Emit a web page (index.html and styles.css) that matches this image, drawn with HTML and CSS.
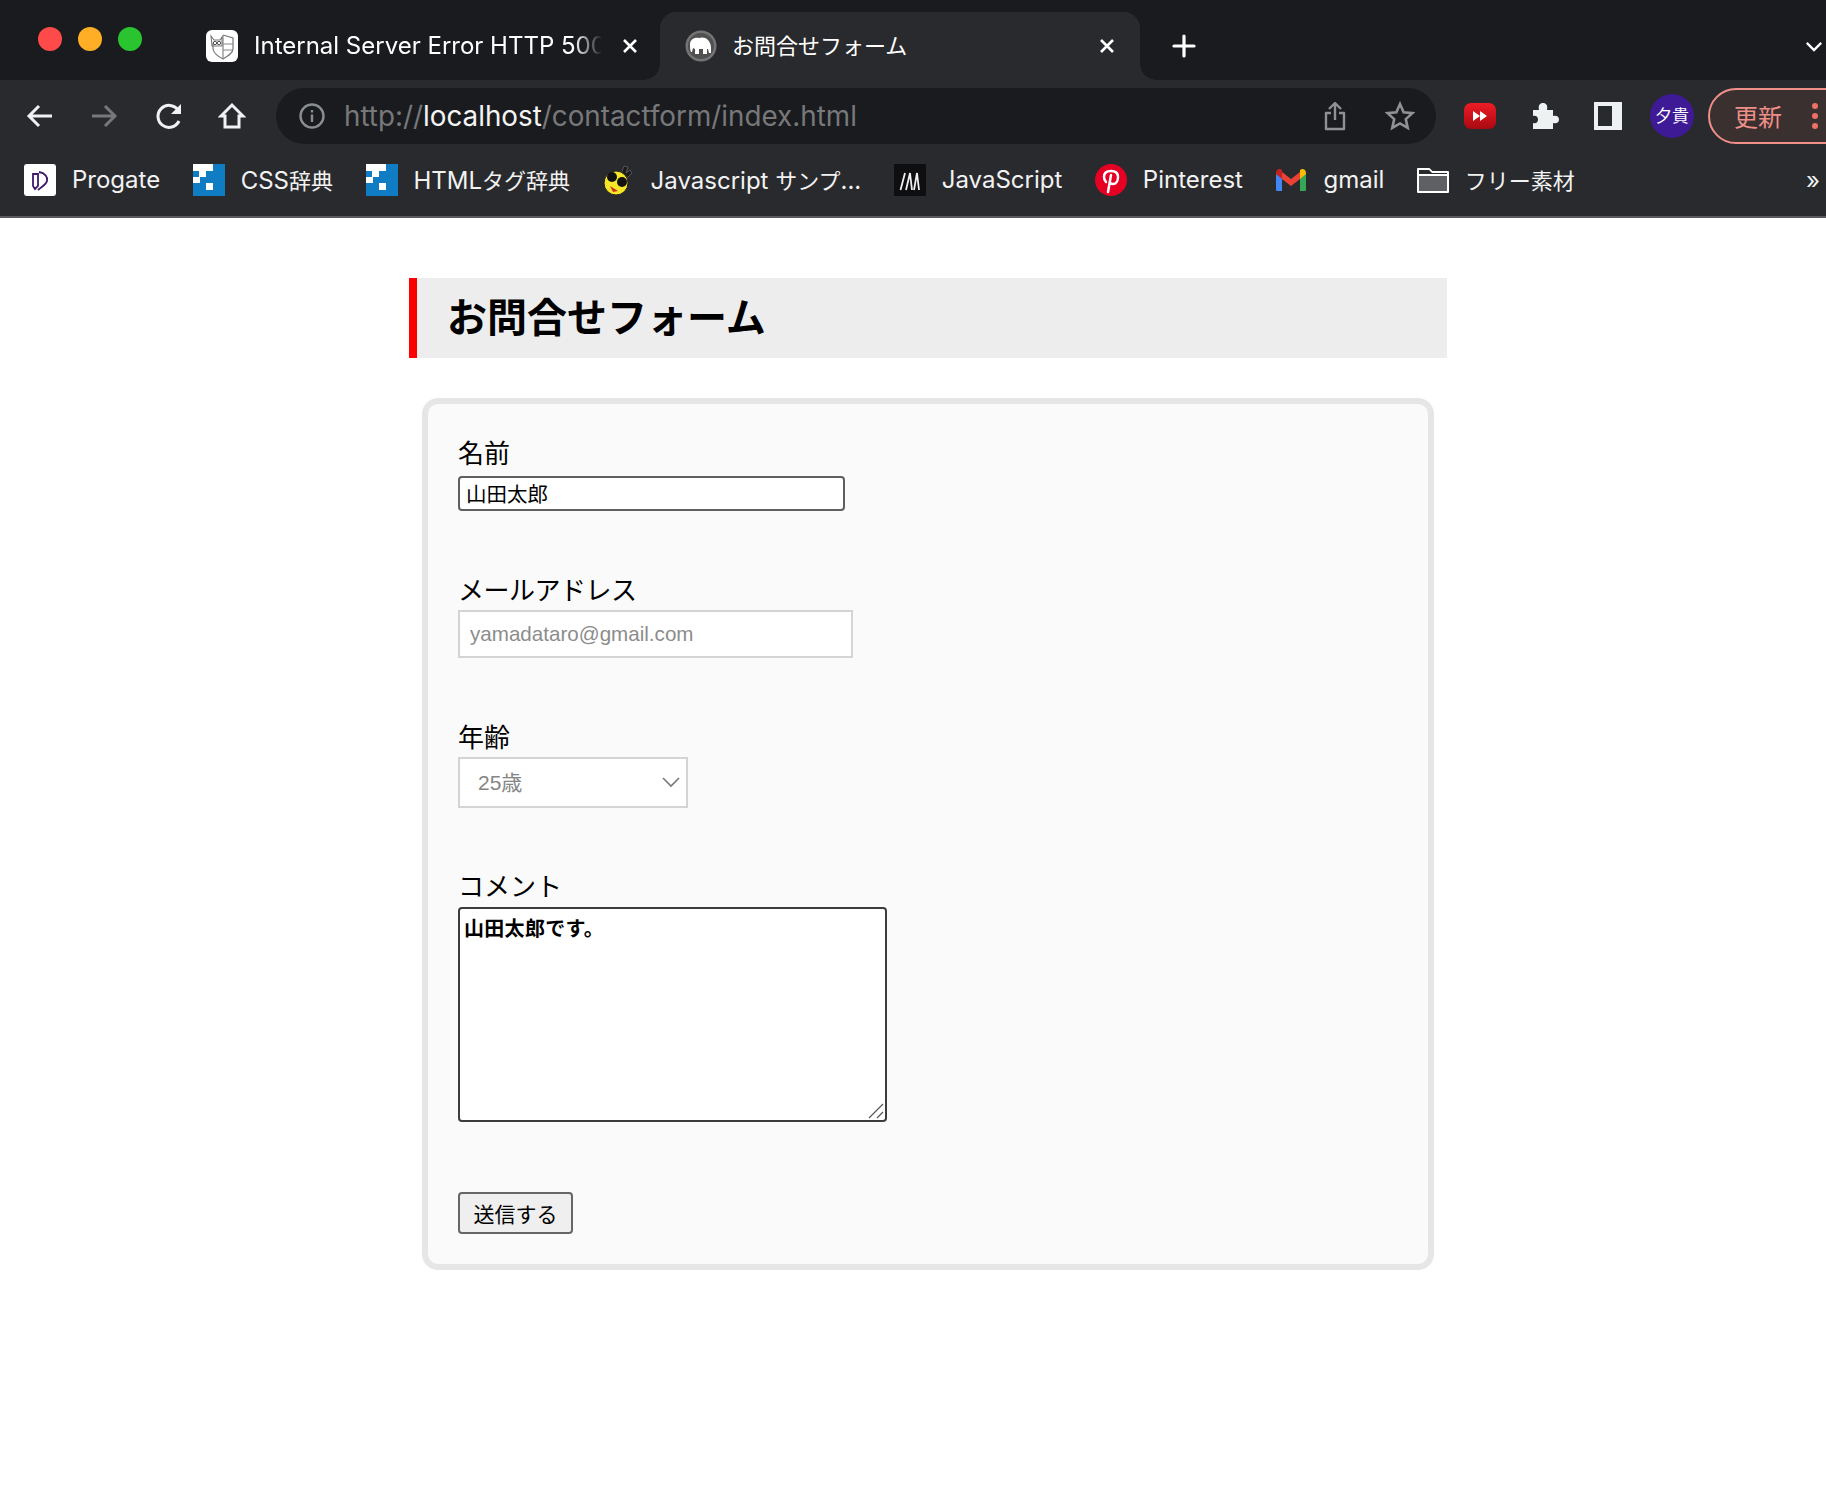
FILE: index.html
```html
<!DOCTYPE html>
<html lang="ja">
<head>
    <meta charset="UTF-8">
    <meta name="viewport" content="width=device-width, initial-scale=1.0">
    <title>お問合せフォーム</title>
    <link rel="stylesheet" href="styles.css">
</head>
<body>

    <!-- Tab strip -->
    <div class="tabstrip">
        <div class="lights">
            <span class="light light-red"></span>
            <span class="light light-yellow"></span>
            <span class="light light-green"></span>
        </div>
        <div class="tab">
            <svg class="favicon" viewBox="0 0 32 32">
                <rect width="32" height="32" rx="6" fill="#fff"/>
                <path d="M17 5l10 3v11c0 4-5 7-10 10-4-2-9-5-10-10V13" fill="none" stroke="#777" stroke-width="1.2"/>
                <path d="M17 5v24M17 14h10M17 20h10" fill="none" stroke="#888" stroke-width="1.2"/>
                <path d="M5 6l3 4h6l2-3v9H6z" fill="none" stroke="#777" stroke-width="1.1"/>
                <circle cx="9" cy="13" r="1.7" fill="none" stroke="#555"/>
                <circle cx="13" cy="13" r="1.7" fill="none" stroke="#555"/>
            </svg>
            <span class="tab-title tab-title-fade">Internal Server Error HTTP 500</span>
            <svg class="tab-close" viewBox="0 0 16 16"><path d="M2 2l12 12M14 2L2 14"/></svg>
        </div>
        <div class="tab tab-active">
            <svg class="favicon" viewBox="0 0 32 32">
                <circle cx="16" cy="16" r="15.500" fill="#747474"/>
                <circle cx="16" cy="16" r="13" fill="#505050"/>
                <path d="M5 14c0-4 4-7 9-6 2-1 7-1 9 2 2 2 3 5 3 8v5h-2l-1-4-1 0v5h-4v-5h-4v5h-4v-5l-2-1-1 4H6c-1-2-1-5-1-8z" fill="#fff"/>
            </svg>
            <span class="tab-title">お問合せフォーム</span>
            <svg class="tab-close" viewBox="0 0 16 16"><path d="M2 2l12 12M14 2L2 14"/></svg>
        </div>
        <svg class="new-tab" viewBox="0 0 24 24"><path d="M12 2v20M2 12h20"/></svg>
        <svg class="tab-search" viewBox="0 0 20 12"><path d="M2 2l8 8 8-8"/></svg>
    </div>

    <!-- Toolbar -->
    <div class="toolbar">
        <svg class="nav-icon" viewBox="0 0 28 28"><path d="M26 14H3M13 4L3 14l10 10"/></svg>
        <svg class="nav-icon nav-off" viewBox="0 0 28 28"><path d="M2 14h23M15 4l10 10-10 10"/></svg>
        <svg class="nav-icon" viewBox="0 0 28 28"><path d="M25 19a11 11 0 1 1-1-11"/><path class="fill-icon" d="M27 2v10H17z"/></svg>
        <svg class="nav-icon" viewBox="0 0 28 28"><path d="M14 3L3 14h4v11h14V14h4z"/></svg>
        <div class="omnibox">
            <svg class="info-icon" viewBox="0 0 26 26">
                <circle cx="13" cy="13" r="11.5"/>
                <path d="M13 11.5v7.5M13 7v2.5"/>
            </svg>
            <div class="url"><span class="url-dim">http://</span><span class="url-host">localhost</span><span class="url-dim">/contactform/index.html</span></div>
            <svg class="share-icon" viewBox="0 0 22 30">
                <path d="M11 19V2M5 8l6-6 6 6M7 12H2v16h18V12h-5"/>
            </svg>
            <svg class="star-icon" viewBox="0 0 30 30">
                <path d="M15 3l3.6 8.2 8.9.9-6.7 6 1.9 8.8-7.700-4.500-7.700 4.500 1.900-8.800-6.700-6 8.900-.9z"/>
            </svg>
        </div>
        <svg class="ext-yt" viewBox="0 0 32 26">
            <defs>
                <linearGradient id="ytred" x1="0" y1="0" x2="0" y2="1">
                    <stop offset="0" stop-color="#ee1c25"/>
                    <stop offset="1" stop-color="#a80a12"/>
                </linearGradient>
            </defs>
            <rect width="32" height="26" rx="7" fill="url(#ytred)"/>
            <path d="M9 8l7 5-7 5zM16 8l7 5-7 5z" fill="#fff"/>
        </svg>
        <svg class="ext-puzzle" viewBox="0 0 28 28">
            <path d="M2 8h6c-1-5 1-7 4-7s5 2 4 7h6v6c4-1 6 1 6 3.500s-2 4.500-6 3.500v6H2v-6c3 1 5-1 5-3.500S5 13 2 14z" fill="#eef1f2"/>
        </svg>
        <div class="side-panel"><span></span></div>
        <div class="avatar">夕貴</div>
        <div class="update">
            <span class="update-text">更新</span>
            <span class="update-dots"><i></i><i></i><i></i></span>
        </div>
    </div>

    <!-- Bookmarks -->
    <div class="bookmarks">
        <a class="bookmark" href="#">
            <svg class="bm-icon" viewBox="0 0 32 32">
                <rect width="32" height="32" rx="3" fill="#fff"/>
                <path d="M9 10h5v12l-3 3-2-3zM15 8c6 1 9 5 8 9-1 4-6 6-9 9" fill="none" stroke="#3f1a6b" stroke-width="1.800"/>
            </svg>
            <span>Progate</span>
        </a>
        <a class="bookmark" href="#">
            <svg class="bm-icon" viewBox="0 0 32 32">
                <rect width="32" height="32" fill="#0f7cc4"/>
                <path d="M0 0h20v7h-7v6H6V7H0zM0 13h7v6H0zM13 19h7v7h-7z" fill="#fff"/>
            </svg>
            <span>CSS<span class="ja">辞典</span></span>
        </a>
        <a class="bookmark" href="#">
            <svg class="bm-icon" viewBox="0 0 32 32">
                <rect width="32" height="32" fill="#0f7cc4"/>
                <path d="M0 0h20v7h-7v6H6V7H0zM0 13h7v6H0zM13 19h7v7h-7z" fill="#fff"/>
            </svg>
            <span>HTML<span class="ja">タグ辞典</span></span>
        </a>
        <a class="bookmark" href="#">
            <svg class="bm-icon" viewBox="0 0 32 32">
                <path d="M18 10l3-8 4 1-2 6 4-3 2 3-5 5z" fill="#1b1b1b" stroke="#555"/>
                <circle cx="13" cy="19" r="12" fill="#f5e629" stroke="#222"/>
                <circle cx="9" cy="13" r="5" fill="#111"/>
                <circle cx="19" cy="18" r="5" fill="#111"/>
                <path d="M7 22l8 5-5 1z" fill="#c6321d"/>
            </svg>
            <span>Javascript <span class="ja">サンプ</span>...</span>
        </a>
        <a class="bookmark" href="#">
            <svg class="bm-icon" viewBox="0 0 32 32">
                <rect width="32" height="32" fill="#0e0e11"/>
                <path d="M6.500 26L11 9M12 26l4-17 2 17M20 26l3-17 2 17" fill="none" stroke="#eee" stroke-width="1.800"/>
            </svg>
            <span>JavaScript</span>
        </a>
        <a class="bookmark" href="#">
            <svg class="bm-icon" viewBox="0 0 32 32">
                <circle cx="16" cy="16" r="16" fill="#e60023"/>
                <path d="M11 18c-2-2-2-4-2-5 0-4 3-6 7-6s7 2 7 6-2 7-5 7c-2 0-3-1-3-2M16 11l-3 17" fill="none" stroke="#fff" stroke-width="2.500" stroke-linecap="round"/>
            </svg>
            <span>Pinterest</span>
        </a>
        <a class="bookmark" href="#">
            <svg class="bm-icon" viewBox="0 0 32 32">
                <path d="M1 9v17a1 1 0 0 0 1 1h5V13z" fill="#4285f4"/>
                <path d="M31 9v17a1 1 0 0 1-1 1h-5V13z" fill="#34a853"/>
                <path d="M7 8l9 7 9-7v7l-9 7-9-7z" fill="#ea4335"/>
                <path d="M1 9c0-4 4-5 6-3v9L1 10z" fill="#c5221f"/>
                <path d="M31 9c0-4-4-5-6-3v9l6-5z" fill="#fbbc04"/>
            </svg>
            <span>gmail</span>
        </a>
        <a class="bookmark" href="#">
            <svg class="bm-folder" viewBox="0 0 32 26">
                <path d="M1 2h11l3 3h16v20H1z" fill="#5f6063" stroke="#fff" stroke-width="2" stroke-linejoin="round"/>
                <path d="M1 8h30" stroke="#fff" stroke-width="2"/>
                <path d="M2 3h10l3 3h15v1H2z" fill="#292a2e"/>
            </svg>
            <span class="ja">フリー素材</span>
        </a>
        <span class="bm-more">»</span>
    </div>

    <!-- Page -->
    <div class="page">
        <h1 class="page-title">お問合せフォーム</h1>

        <form class="contact-form">
            <div class="field field-name">
                <label for="name">名前</label>
                <input type="text" id="name" class="input-plain" value="山田太郎">
            </div>
            <div class="field field-mail">
                <label for="mail">メールアドレス</label>
                <input type="text" id="mail" class="input-mail" placeholder="yamadataro@gmail.com">
            </div>
            <div class="field field-age">
                <label for="age">年齢</label>
                <div class="select-wrap">
                    <select id="age" class="input-select">
                        <option>25歳</option>
                    </select>
                    <svg class="select-arrow" viewBox="0 0 18 11"><path d="M1 1l8 8 8-8"/></svg>
                </div>
            </div>
            <div class="field field-comment">
                <label for="comment">コメント</label>
                <div class="comment-wrap">
                    <textarea id="comment" class="input-comment">山田太郎です。</textarea>
                    <svg class="comment-grip" viewBox="0 0 16 16"><path d="M1 15L15 1M9 15l6-6"/></svg>
                </div>
            </div>
            <button type="button" class="submit">送信する</button>
        </form>
    </div>

</body>
</html>
```

FILE: styles.css
```css
/* General Styles */
body {
    margin: 0;
    padding: 0;
    background-color: #fff;
    font-family: "Liberation Sans", "Noto Sans CJK JP", sans-serif;
    color: #000;
}

svg {
    display: block;
    flex: none;
}

/* Tab strip */
.tabstrip {
    display: flex;
    height: 80px;
    background-color: #1a1b1e;
    color: #fff;
    font-family: Inter, "Noto Sans CJK JP", sans-serif;
}

.lights {
    flex: none;
    display: flex;
    gap: 16px;
    width: 206px;
    padding: 27px 0 0 38px;
    box-sizing: border-box;
}

.light {
    width: 24px;
    height: 24px;
    border-radius: 50%;
}

.light-red { background-color: #ff4a4a; }
.light-yellow { background-color: #ffae25; }
.light-green { background-color: #29c42f; }

.tab {
    flex: none;
    display: flex;
    align-items: center;
    width: 454px;
    height: 68px;
    margin-top: 12px;
    position: relative;
    box-sizing: border-box;
}

.tab-active {
    width: 480px;
    padding-left: 25px;
    background-color: #292a2e;
    border-radius: 16px 16px 0 0;
}

/* curved feet of the active tab */
.tab-active::before,
.tab-active::after {
    content: "";
    position: absolute;
    bottom: 0;
    width: 16px;
    height: 16px;
    background: radial-gradient(circle at 0 0, #1a1b1e 15.5px, #292a2e 16px);
}

.tab-active::before {
    left: -16px;
}

.tab-active::after {
    right: -16px;
    background: radial-gradient(circle at 100% 0, #1a1b1e 15.500px, #292a2e 16px);
}

.favicon {
    width: 32px;
    height: 32px;
}

.tab-title {
    margin-left: 16px;
    padding-bottom: 2px;
    font-size: 24px;
    width: 348px;
    white-space: nowrap;
    overflow: hidden;
}

.tab-title-fade {
    -webkit-mask-image: linear-gradient(to right, #000 92%, transparent 100%);
    mask-image: linear-gradient(to right, #000 92%, transparent 100%);
}

.tab-active .tab-title {
    margin-left: 15px;
    padding-bottom: 4px;
    font-size: 22px;
    width: 347px;
}

.tab-close {
    width: 16px;
    height: 16px;
    margin-left: 20px;
    fill: none;
    stroke: #fff;
    stroke-width: 2.6;
}

.new-tab {
    width: 24px;
    height: 24px;
    margin: 34px 0 0 32px;
    fill: none;
    stroke: #fff;
    stroke-width: 3.2;
    stroke-linecap: round;
}

.tab-search {
    width: 18px;
    height: 11px;
    margin: 41px 3px 0 auto;
    fill: none;
    stroke: #fff;
    stroke-width: 2.6;
}

/* Toolbar */
.toolbar {
    display: flex;
    align-items: center;
    height: 64px;
    box-sizing: border-box;
    padding: 8px 0 0 26px;
    background-color: #292a2e;
    overflow: hidden;
    font-family: Inter, "Noto Sans CJK JP", sans-serif;
}

.nav-icon {
    width: 28px;
    height: 28px;
    margin-right: 36px;
    fill: none;
    stroke: #f0f1f2;
    stroke-width: 3;
}

.nav-off {
    stroke: #77787a;
}

.fill-icon {
    fill: #f0f1f2;
    stroke: none;
}

.omnibox {
    flex: none;
    display: flex;
    align-items: center;
    width: 1160px;
    height: 56px;
    margin-left: -6px;
    box-sizing: border-box;
    padding-left: 23px;
    background-color: #1a1b1e;
    border-radius: 28px;
}

.info-icon {
    width: 26px;
    height: 26px;
    fill: none;
    stroke: #8a8d90;
    stroke-width: 2.4;
}

.url {
    flex: 1;
    margin-left: 19px;
    font-size: 27.8px;
    white-space: nowrap;
}

.url-dim {
    color: #77787a;
}

.url-host {
    color: #f4f4f4;
}

.share-icon {
    width: 22px;
    height: 30px;
    fill: none;
    stroke: #8f9193;
    stroke-width: 2.4;
    stroke-linejoin: round;
}

.star-icon {
    width: 30px;
    height: 30px;
    margin: 0 21px 0 39px;
    fill: none;
    stroke: #8f9193;
    stroke-width: 2.6;
}

.ext-yt {
    width: 32px;
    height: 26px;
    margin-left: 28px;
}

.ext-puzzle {
    width: 28px;
    height: 28px;
    margin-left: 35px;
}

.side-panel {
    flex: none;
    width: 28px;
    height: 28px;
    margin-left: 35px;
    box-sizing: border-box;
    padding: 4px 10px 4px 4px;
    background-color: #eef1f2;
}

.side-panel span {
    display: block;
    height: 100%;
    background-color: #292a2e;
}

.avatar {
    flex: none;
    width: 44px;
    height: 44px;
    margin-left: 28px;
    border-radius: 50%;
    background-color: #3e1a96;
    color: #fff;
    font-size: 17px;
    line-height: 44px;
    text-align: center;
    white-space: nowrap;
}

.update {
    flex: none;
    display: flex;
    align-items: center;
    width: 160px;
    height: 56px;
    margin-left: 14px;
    box-sizing: border-box;
    padding-left: 24px;
    border: 2px solid #ee8f88;
    border-radius: 28px;
    background-color: #3a3030;
    color: #ee8f88;
    font-size: 24px;
}

.update-text {
    padding-bottom: 2px;
}

.update-dots {
    display: flex;
    flex-direction: column;
    gap: 4px;
    margin-left: 30px;
}

.update-dots i {
    width: 6px;
    height: 6px;
    border-radius: 50%;
    background-color: #ee6f66;
}

/* Bookmarks */
.bookmarks {
    display: flex;
    align-items: center;
    height: 72px;
    padding: 0 6px 0 24px;
    background-color: #292a2e;
    border-bottom: 2px solid #5a5b5e;
    font-family: Inter, "Noto Sans CJK JP", sans-serif;
    font-size: 24px;
}

.bookmark {
    display: flex;
    align-items: center;
    gap: 16px;
    margin-right: 32.5px;
    color: #f2f2f2;
    text-decoration: none;
    white-space: nowrap;
}

.bookmark > span {
    padding-bottom: 2px;
}

.ja {
    font-size: 22px;
}

.bm-icon {
    width: 32px;
    height: 32px;
}

.bm-folder {
    width: 32px;
    height: 26px;
}

.bm-more {
    margin-left: auto;
    color: #f2f2f2;
    font-size: 24px;
}

/* Page */
.page {
    width: 1038px;
    margin: 60px 0 0 409px;
}

.page-title {
    margin: 0;
    height: 80px;
    padding-left: 30px;
    box-sizing: border-box;
    background-color: #ededed;
    border-left: 8px solid #ff0000;
    font-size: 40px;
    line-height: 80px;
    font-weight: bold;
}

/* Contact form */
.contact-form {
    margin: 40px 13px 0;
    padding: 35px 30px 30px;
    background-color: #fafafa;
    border: 6px solid #e6e6e6;
    border-radius: 16px;
}

.field label {
    display: block;
    font-size: 26px;
    line-height: 30px;
}

.field-name {
    margin-bottom: 65px;
}

.field-name label {
    margin-bottom: 7px;
}

.field-mail {
    margin-bottom: 65px;
}

.field-mail label {
    margin-bottom: 4px;
    letter-spacing: -0.5px;
}

.field-age {
    margin-bottom: 64px;
}

.field-age label {
    margin-bottom: 4px;
}

.field-comment {
    margin-bottom: 70px;
}

.field-comment label {
    margin-bottom: 5px;
}

.input-plain {
    display: block;
    width: 387px;
    height: 35px;
    box-sizing: border-box;
    padding: 0 6px 2px;
    border: 2px solid #5f5f5f;
    border-radius: 4px;
    background-color: #fff;
    font-family: inherit;
    font-size: 20.5px;
}

.input-mail {
    display: block;
    width: 395px;
    height: 48px;
    box-sizing: border-box;
    padding: 0 10px;
    border: 2px solid #d4d4d4;
    background-color: #fff;
    font-family: inherit;
    font-size: 20.6px;
}

.input-mail::placeholder {
    color: #8c8c8c;
}

.select-wrap {
    position: relative;
    width: 230px;
}

.input-select {
    display: block;
    width: 230px;
    height: 51px;
    box-sizing: border-box;
    padding: 0 18px;
    appearance: none;
    border: 2px solid #d4d4d4;
    border-radius: 0;
    background-color: #fff;
    color: #858585;
    font-family: inherit;
    font-size: 21px;
}

.select-arrow {
    position: absolute;
    top: 20px;
    right: 8px;
    width: 18px;
    height: 11px;
    fill: none;
    stroke: #777;
    stroke-width: 1.6;
    pointer-events: none;
}

.comment-wrap {
    position: relative;
    width: 429px;
}

.input-comment {
    display: block;
    width: 429px;
    height: 215px;
    box-sizing: border-box;
    margin: 0;
    padding: 4px 4px;
    border: 2px solid #3c3c3c;
    border-radius: 4px;
    background-color: #fff;
    font-family: inherit;
    font-size: 20px;
    font-weight: bold;
    letter-spacing: 0.3px;
    resize: none;
}

.comment-grip {
    position: absolute;
    right: 3px;
    bottom: 3px;
    width: 16px;
    height: 16px;
    fill: none;
    stroke: #555;
    stroke-width: 1.2;
    pointer-events: none;
}

.submit {
    display: block;
    width: 115px;
    height: 42px;
    padding: 0;
    background-color: #efefef;
    border: 2px solid #666;
    border-radius: 4px;
    font-family: inherit;
    font-size: 21px;
    color: #000;
}
```
